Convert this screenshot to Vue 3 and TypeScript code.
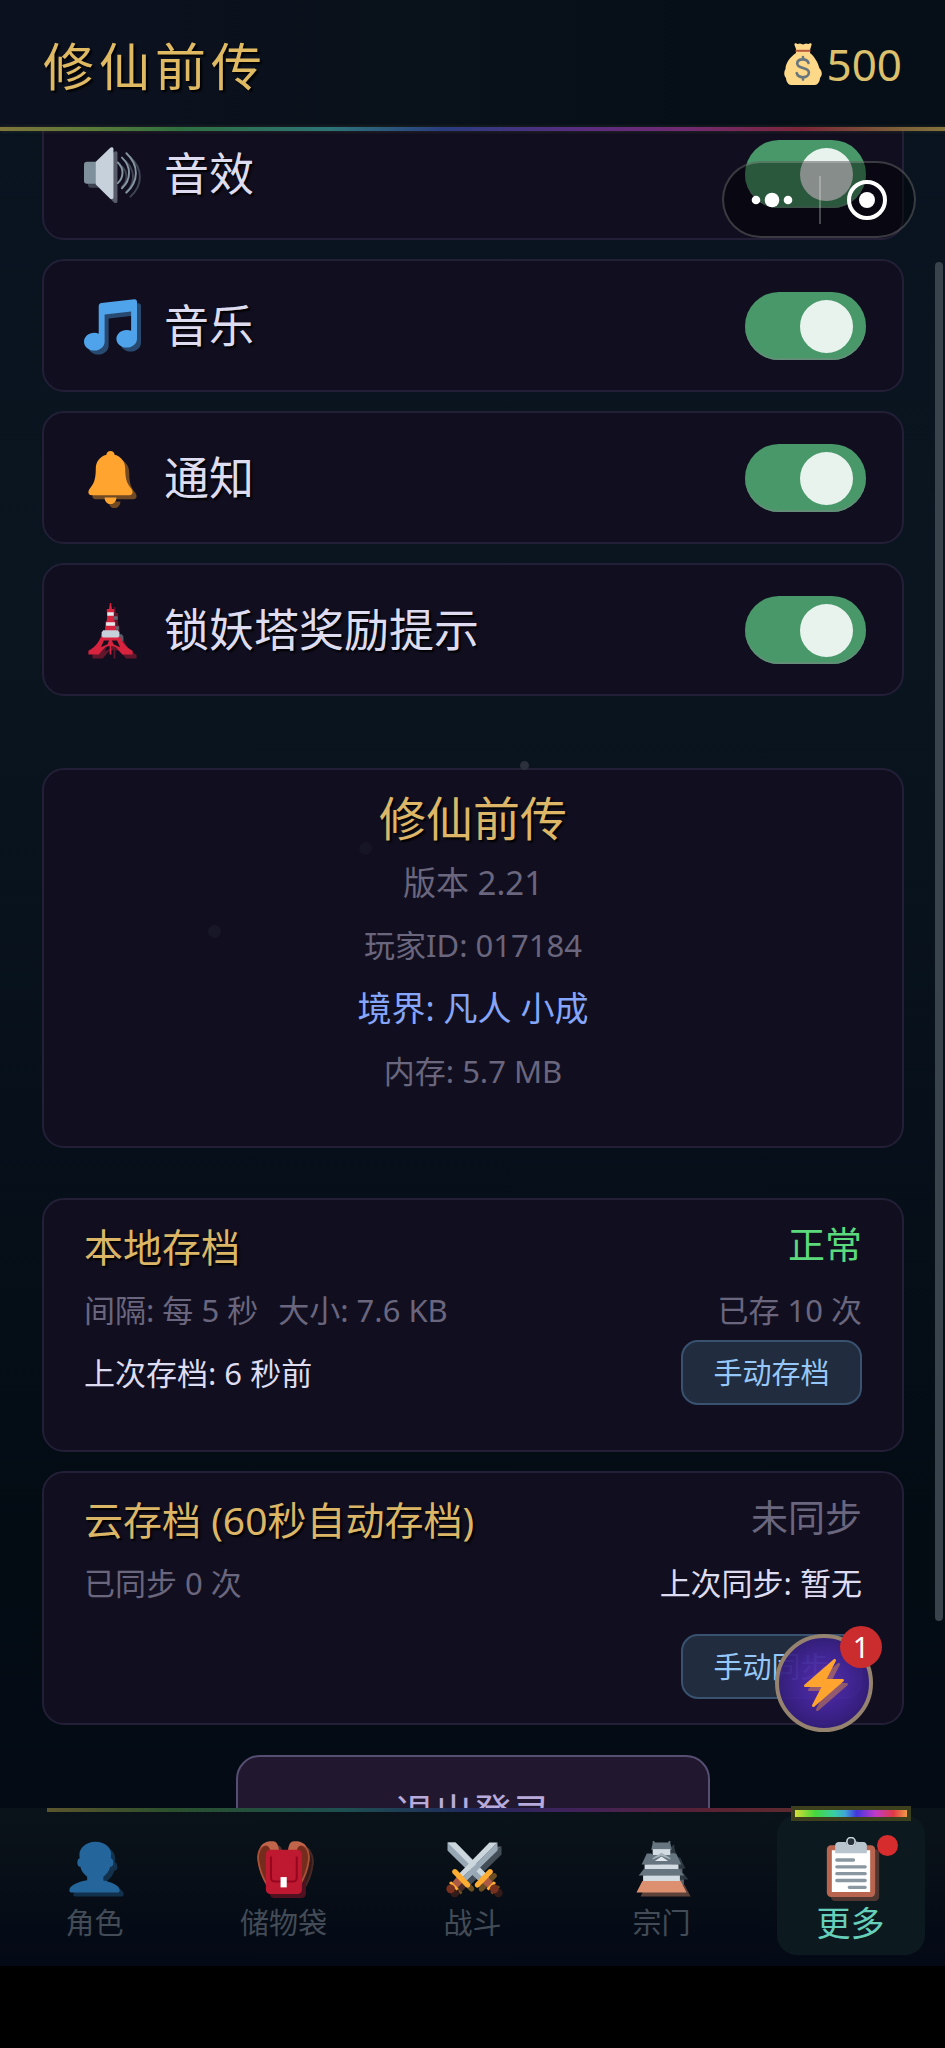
<script setup lang="ts">
import { ref } from 'vue'

interface Setting {
  id: string
  icon: string
  label: string
  on: boolean
}

interface Tab {
  id: string
  icon: string
  label: string
  dot?: boolean
}

const settings = ref<Setting[]>([
  { id: 'sound', icon: 'speaker', label: '音效', on: true },
  { id: 'music-on', icon: 'music', label: '音乐', on: true },
  { id: 'notice', icon: 'bell', label: '通知', on: true },
  { id: 'tower-tip', icon: 'tower', label: '锁妖塔奖励提示', on: true },
])

const tabs: Tab[] = [
  { id: 'role', icon: 'person', label: '角色' },
  { id: 'bag', icon: 'backpack', label: '储物袋' },
  { id: 'battle', icon: 'swords', label: '战斗' },
  { id: 'sect', icon: 'castle', label: '宗门' },
  { id: 'more', icon: 'clipboard', label: '更多', dot: true },
]

const activeTab = ref('more')
const gold = ref(500)
const taskCount = ref(1)
</script>

<template>
  <div class="app">
    <svg class="sprite" aria-hidden="true">
      <symbol id="speaker" viewBox="0 0 36 36">
        <path fill="#7f909d" d="M2 10h7v15H2a2 2 0 0 1-2-2V12a2 2 0 0 1 2-2z" />
        <path fill="#c6d1dc" d="M8 10 17.500.8C18.600-.2 20 0 20 1.500V34c0 1.500-1.400 1.800-2.500.8L8 25.500z" />
        <g fill="none" stroke="#8796a3" stroke-width="1.300" stroke-linecap="round">
          <path d="M23 10.500c4.200 4 4.200 10 0 14" />
          <path d="M25.800 7.200c6.400 6 6.400 14.800 0 20.800" />
          <path d="M28.800 4.200c8.600 8 8.600 18.800 0 26.800" />
        </g>
      </symbol>
      <symbol id="music" viewBox="0 0 36 36">
        <path fill="#4fa3ea" d="M34.209.206 11.791 2.793C10.806 2.907 10 3.811 10 4.803v18.782C9.090 23.214 8.075 23 7 23c-3.865 0-7 2.685-7 6 0 3.314 3.135 6 7 6s7-2.686 7-6V10.539l18-2.077v13.124c-.910-.372-1.925-.586-3-.586-3.865 0-7 2.685-7 6 0 3.314 3.135 6 7 6s7-2.686 7-6V1.803c0-.992-.806-1.710-1.791-1.597z" />
      </symbol>
      <symbol id="bell" viewBox="0 0 36 36">
        <path fill="#ffa42e" d="M18 0c1.500 0 2.700 1 2.800 2.500C25.400 3.700 28 7.500 28 12c0 8 1.500 10 4 13.500.700 1 1 1.600 1 2.500 0 1.200-.900 2-2.200 2H5.200C3.900 30 3 29.200 3 28c0-.900.300-1.500 1-2.500C6.500 22 8 20 8 12c0-4.500 2.600-8.300 7.200-9.500C15.300 1 16.500 0 18 0zM14 31.500h8c0 2.700-1.700 4.500-4 4.500s-4-1.800-4-4.500z" />
      </symbol>
      <symbol id="tower" viewBox="0 0 36 36">
        <path fill="#d8233e" d="M17.600 0h.8l.6 4h1.500v2.500H20l.6 6h.7l.5 7h1.700c1.500 6.500 4.500 10 9.500 13v2.500h-7l-3-3.500c-2-3-8-3-10 0l-3 3.500H3v-2.500c5-3 8-6.500 9.500-13h1.700l.5-7h.7l.6-6h-.5V4H17z" />
        <path fill="#e4e9ee" d="M15.800 6.200h4.400v2.500h-4.400zM15 13h6v2.500h-6z" />
        <path fill="#c6d1dc" d="M13 18.500h10l1 1.500v2.500l-1 1H13l-1-1V20z" />
        <path fill="#12101f" d="M13.500 25.500h3.500L16 28l-4.500 2zM19 25.500h3.500l2 4.500-4.500-2z" />
        <path fill="#d8233e" d="M17.400 25h1.200v10h-1.200z" />
      </symbol>
      <symbol id="person" viewBox="0 0 36 36">
        <path fill="#24659c" d="M24 26.799v-2.566c2-1.348 4.080-3.779 4.703-6.896.186.103.206.170.413.170.991 0 1.709-1.287 1.709-2.873 0-1.562-.823-2.827-1.794-2.865.187-.674.293-1.577.293-2.735C29.324 5.168 26 .527 18.541.527c-6.629 0-10.777 4.641-10.777 8.507 0 1.123.069 2.043.188 2.755-.911.137-1.629 1.352-1.629 2.845 0 1.587.804 2.873 1.796 2.873.206 0 .025-.067.209-.170C8.952 20.453 11 22.885 13 24.232v2.414c-5 .645-12 3.437-12 6.230v1.061C1 35 2.076 35 3.137 35h29.725C33.924 35 35 35 35 33.938v-1.061c0-2.615-6-5.225-11-6.078z" />
      </symbol>
      <symbol id="backpack" viewBox="0 0 36 36">
        <path fill="#762c1c" d="M7 2C2 3-.500 8 .500 14c1 7 3.500 12 6.500 17l3-2V6zM29 2c5 1 7.500 6 6.500 12-1 7-3.500 12-6.500 17l-3-2V6z" />
        <path fill="none" stroke="#a8523a" stroke-width="1.200" d="M7 2C2 3 0 8 1 14c1 7 3.500 12 6 16M29 2c5 1 7 6 6 12-1 7-3.500 12-6 16" />
        <path fill="#c0644a" d="M2 4.500C4 1 7 0 11 .200c2.500 0 3.500 2.500 4 6.300H9C8.500 2.500 5 2 2 4.500zM34 4.500C32 1 29 0 25 .200c-2.500 0-3.500 2.500-4 6.300h6c.500-4 4-4.500 7-2z" />
        <rect x="6" y="6" width="24.500" height="30" rx="3" fill="#be1931" />
        <path fill="none" stroke="#96061f" stroke-width="1.400" d="M9.500 10.500V25a2.500 2.500 0 0 0 2.500 2.500h12.500A2.500 2.500 0 0 0 27 25V10.500" />
        <path fill="#fff" d="M16 24.500h4.200v7H16z" />
      </symbol>
      <symbol id="swords" viewBox="0 0 36 36">
        <path fill="#97a7b4" d="M1 1v5.500L22 27l5-5L6.500 1z" />
        <path fill="#ccd6dd" d="M1 1l23.500 23.500L27 22 6.500 1z" />
        <path fill="#ad5a45" d="m27.500 23-4 4 5.500 5.500 3.500-3.500zM8.500 23l4 4-5.500 5.500-3.500-3.500z" />
        <path fill="#ffac33" d="M31.700 21.700a1.900 1.900 0 0 0-3-2.200l-8.500 8.800a1.900 1.900 0 1 0 2.800 2.500zM34 28.500l-1.500-1.200-5 5 1.300 1.400zM2 28.500l1.500-1.200 5 5-1.300 1.400z" />
        <circle cx="32.800" cy="32.500" r="3" fill="#78301f" />
        <circle cx="3.200" cy="32.500" r="3" fill="#78301f" />
        <path fill="#9aaab6" d="M35 1v5.500L14 27l-2.500-2.500z" />
        <path fill="#ccd6dd" d="M35 1 11.500 24.500 9 22 29.500 1z" />
        <path fill="#ffac33" d="M4.300 21.700a1.900 1.900 0 0 1 3-2.200l8.500 8.800a1.900 1.900 0 1 1-2.800 2.500z" />
      </symbol>
      <symbol id="castle" viewBox="0 0 36 36">
        <path fill="#66757f" d="M12 0h1l.500 1h9l.500-1h1v1.500l1 4.500H11l1-4.500z" />
        <path fill="#d3dce3" d="M12 5.500h12V10H12z" />
        <path fill="#66757f" d="M8 8.500h3l1 1h12l1-1h3l3.500 7.500H4.500z" />
        <path fill="#a5b2bc" d="m18 8 6 3.500v1L18 10l-6 2.500v-1z" />
        <path fill="#e1e8ed" d="m18 10.500 4.500 3h-9z" />
        <path fill="#d3dce3" d="M6.500 16h23v3.500h-23z" />
        <path fill="#66757f" d="M6 19h24l3.500 4.500h-31z" />
        <path fill="#d3dce3" d="M5.500 23.500h25v3.700h-25z" />
        <path fill="#dd9070" d="M5 27.200h26L35 35H1z" />
      </symbol>
      <symbol id="clipboard" viewBox="0 0 36 36">
        <rect x="3.500" y="5" width="29" height="31" rx="2.500" fill="#b8644e" />
        <path fill="#fff" d="M6.500 8h23v25h-23z" />
        <circle cx="18" cy="2.800" r="2.500" fill="#26323a" stroke="#ccd6dd" stroke-width="1" />
        <path fill="#b8c5cf" d="M10.500 3h4.300a3.300 3.300 0 0 0 6.400 0h4.300c1 0 2 .8 2 2v4.800h-19V5c0-1.200 1-2 2-2z" />
        <path stroke="#8997a0" stroke-width="2" stroke-linecap="round" d="M9.500 13.800h10M9.500 17.900h17M9.500 22h17M9.500 26.100h17M17 30.200h9.500" />
      </symbol>
      <symbol id="bolt" viewBox="0 0 36 36">
        <path fill="#ffa42e" d="M32.938 15.651C32.792 15.260 32.418 15 32 15H19.925L26.890 1.458c.219-.426.106-.947-.271-1.243C26.437.071 26.218 0 26 0c-.233 0-.466.082-.653.243L18 6.588 3.347 19.243c-.316.273-.430.714-.284 1.105S3.582 21 4 21h12.075L9.110 34.542c-.219.426-.106.947.271 1.243.182.144.401.215.619.215.233 0 .466-.082.653-.243L18 29.412l14.653-12.655c.317-.273.430-.714.285-1.106z" />
      </symbol>
    </svg>

    <header class="topbar">
      <h1 class="brand">修仙前传</h1>
      <div class="gold">
        <svg class="purse" viewBox="0 0 38 42" aria-hidden="true">
          <path fill="#fdd888" d="M12 6 10.500 2C10 .5 11.500-.3 13 .8c1 .7 2-.3 3-.3s2 1 3 1 2-1 3-1 2 1 3 .3c1.500-1.100 3-.3 2.500 1.200L26 7v3c5 4 8 10 9.300 15 2 2 3.200 5 2 8-.3 1-1 1-1.300 2 0 3.500-2.500 7-5 7H7c-2.500 0-5-3.500-5-7C0 33-.5 29 1.500 26c0-6 5-12.500 10.500-16z" />
          <path fill="#b8583c" d="M11.500 6.800h15v2h-15z" />
          <path fill="none" stroke="#67757f" stroke-width="2.600" stroke-linecap="round" d="M24.500 20c-.8-2.600-3-3.600-5.700-3.600-3.300 0-5.600 1.600-5.600 4.200 0 6 11.700 2.800 11.700 9 0 2.800-2.600 4.600-5.900 4.600-3.200 0-5.600-1.300-6.300-4M19 14v2.400M19 34.200v2.400" />
        </svg>
        <span>{{ gold }}</span>
      </div>
    </header>

    <main class="content">
      <section class="stack settings">
        <div v-for="item in settings" :key="item.id" class="card setting">
          <svg class="icon" aria-hidden="true">
            <use class="ghost" :href="'#' + item.icon" />
            <use :href="'#' + item.icon" />
          </svg>
          <label :for="item.id">{{ item.label }}</label>
          <input :id="item.id" v-model="item.on" class="toggle" type="checkbox" role="switch" />
        </div>
      </section>

      <section class="card about">
        <h2 class="about-title">修仙前传</h2>
        <p class="version">版本 2.21</p>
        <p>玩家ID: 017184</p>
        <p class="realm">境界: 凡人 小成</p>
        <p>内存: 5.7 MB</p>
      </section>

      <section class="stack">
        <article class="card save">
          <div class="line head">
            <h2>本地存档</h2>
            <span class="status ok">正常</span>
          </div>
          <div class="line muted">
            <span class="pair"><span>间隔: 每 5 秒</span><span>大小: 7.6 KB</span></span>
            <span>已存 10 次</span>
          </div>
          <div class="line">
            <span>上次存档: 6 秒前</span>
            <button class="small-button" type="button">手动存档</button>
          </div>
        </article>

        <article class="card save cloud">
          <div class="line head">
            <h2>云存档 (60秒自动存档)</h2>
            <span class="status">未同步</span>
          </div>
          <div class="line">
            <span class="muted">已同步 0 次</span>
            <span>上次同步: 暂无</span>
          </div>
          <div class="line action">
            <button class="small-button" type="button">手动同步</button>
          </div>
        </article>
      </section>

      <button class="logout" type="button">退出登录</button>

      <i class="mote mote-a"></i>
      <i class="mote mote-b"></i>
      <i class="mote mote-c"></i>
      <i class="scrollbar"></i>

      <button class="quick" type="button" aria-label="快捷任务">
        <svg class="icon bolt" aria-hidden="true">
          <use class="ghost" href="#bolt" />
          <use href="#bolt" />
        </svg>
        <span class="count">{{ taskCount }}</span>
      </button>
    </main>

    <nav class="tabs">
      <div v-for="tab in tabs" :key="tab.id" class="cell">
        <button
          class="tab"
          :class="{ active: tab.id === activeTab }"
          type="button"
          @click="activeTab = tab.id"
        >
          <span class="tab-icon">
            <svg class="icon" aria-hidden="true">
              <use class="ghost" :href="'#' + tab.icon" />
              <use :href="'#' + tab.icon" />
            </svg>
            <i v-if="tab.dot" class="dot"></i>
          </span>
          <span class="tab-label">{{ tab.label }}</span>
        </button>
      </div>
    </nav>
    <div class="safe-area"></div>

    <div class="capsule">
      <button type="button" aria-label="菜单">
        <svg width="42" height="16" viewBox="0 0 42 16" fill="#fff" aria-hidden="true">
          <circle cx="5" cy="8" r="4.300" />
          <circle cx="21" cy="8" r="7.300" />
          <circle cx="37" cy="8" r="4.300" />
        </svg>
      </button>
      <button type="button" aria-label="关闭">
        <svg width="42" height="42" viewBox="0 0 42 42" aria-hidden="true">
          <circle cx="21" cy="21" r="18" fill="none" stroke="#fff" stroke-width="4" />
          <circle cx="21" cy="21" r="8" fill="#fff" />
        </svg>
      </button>
    </div>
  </div>
</template>

<style>
body {
  margin: 0;
  background: #000;
}
</style>

<style scoped>
* {
  box-sizing: border-box;
}

h1,
h2,
p {
  margin: 0;
  font-weight: 400;
}

button {
  padding: 0;
  border: 0;
  background: none;
  color: inherit;
  font: inherit;
  cursor: pointer;
}

.app {
  position: relative;
  display: flex;
  flex-direction: column;
  height: 100vh;
  overflow: hidden;
  background: linear-gradient(180deg, #08131f 0, #0a1520 30%, #07101a 55%, #030b13 75%, #050b16 100%);
  color: #dedcf0;
  font-family: "Noto Sans", "Noto Sans CJK SC", sans-serif;
  font-size: 31px;
}

.sprite {
  position: absolute;
  width: 0;
  height: 0;
}

.icon {
  flex: none;
  width: 53px;
  height: 53px;
  overflow: visible;
}

.ghost {
  opacity: 0.4;
  transform: translate(4px, 4px);
}

.topbar {
  position: relative;
  z-index: 1;
  flex: none;
  display: flex;
  align-items: center;
  justify-content: space-between;
  height: 131px;
  padding: 0 43px 4px;
  background: linear-gradient(90deg, #0c1120, #09111a 45%, #060e18 75%, #060e17);
}

.topbar::after {
  content: "";
  position: absolute;
  inset: auto 0 0;
  height: 4px;
  background: linear-gradient(90deg, #80753a, #5a7a39 10%, #2f7040 19%, #2c7478 35%, #2a3c80 47%, #5b2c80 62%, #722a70 73%, #7c2638 85%, #7c5a38 94%, #84733c);
  box-shadow: 0 0 4px rgba(90, 90, 60, 0.4);
}

.brand {
  color: #e0b963;
  font-size: 51px;
  letter-spacing: 5px;
  text-shadow: 2px 2px 2px #000;
}

.gold {
  display: flex;
  align-items: center;
  gap: 4px;
  color: #dcc06c;
  font-size: 44px;
}

.purse {
  width: 38px;
  height: 42px;
}

.content {
  position: relative;
  flex: 1;
  min-height: 0;
  padding: 0 41px 0 42px;
  overflow: hidden;
}

.stack {
  display: flex;
  flex-direction: column;
  gap: 19px;
}

.settings {
  margin-top: -24px;
}

.card {
  border: 2px solid #221f36;
  border-radius: 22px;
  background: #110f1f;
}

.setting {
  display: flex;
  align-items: center;
  gap: 27px;
  height: 133px;
  padding: 0 36px 0 40px;
}

.setting label {
  flex: 1;
  padding-bottom: 4px;
  font-size: 45px;
  text-shadow: 2px 2px 2px #000;
}

.toggle {
  position: relative;
  width: 121px;
  height: 68px;
  margin: 0;
  appearance: none;
  border-radius: 34px;
  background: #3a4150;
  cursor: pointer;
}

.toggle::before {
  content: "";
  position: absolute;
  top: 8px;
  left: 13px;
  width: 53px;
  height: 53px;
  border-radius: 50%;
  background: #e8f3ee;
}

.toggle:checked {
  background: #48986a;
  box-shadow: inset 0 -2px 0 #618f77;
}

.toggle:checked::before {
  right: 13px;
  left: auto;
}

.about {
  margin: 72px 0 50px;
  padding: 18px 0 43px;
  color: #6a667e;
  line-height: 63px;
  text-align: center;
}

.about-title {
  padding-bottom: 3px;
  color: #ddb668;
  font-size: 47px;
  line-height: 60px;
  text-shadow: 2px 2px 2px #000;
}

.about .version {
  font-size: 33px;
}

.about .realm {
  color: #85a6fb;
  font-size: 34px;
}

.save {
  padding: 15px 40px 46px;
}

.save h2 {
  color: #dcb667;
  font-size: 39px;
  text-shadow: 2px 2px 2px #000;
}

.line {
  display: flex;
  align-items: center;
  justify-content: space-between;
  height: 63px;
  white-space: nowrap;
}

.line > span {
  padding-bottom: 3px;
}

.line.head {
  padding-bottom: 4px;
}

.pair {
  display: flex;
  gap: 20px;
}

.muted,
.status {
  color: #6a667e;
}

.status {
  font-size: 37px;
}

.status.ok {
  color: #5bd97c;
}

.cloud {
  padding-bottom: 24px;
}

.action {
  justify-content: flex-end;
  height: 65px;
  margin-top: 20px;
}

.small-button {
  flex: none;
  width: 181px;
  height: 65px;
  padding-bottom: 3px;
  border: 2px solid #395270;
  border-radius: 17px;
  background: #212c3e;
  color: #95c8f8;
  font-size: 29px;
}

.logout {
  display: block;
  width: 55%;
  height: 116px;
  margin: 30px auto 0;
  padding-bottom: 6px;
  border: 2px solid #564f72;
  border-radius: 24px;
  background: #21182f;
  color: #b8aadb;
  font-size: 39px;
}

.mote {
  position: absolute;
  border-radius: 50%;
}

.mote-a {
  top: 630px;
  left: 55%;
  width: 9px;
  height: 9px;
  background: #2c303c;
}

.mote-b {
  top: 711px;
  left: 38%;
  width: 13px;
  height: 13px;
  background: #161525;
}

.mote-c {
  top: 794px;
  left: 22%;
  width: 13px;
  height: 13px;
  background: #171728;
}

.scrollbar {
  position: absolute;
  top: 131px;
  right: 2px;
  bottom: 187px;
  width: 8px;
  border-radius: 4px;
  background: #39434b;
}

.quick {
  position: absolute;
  right: 72px;
  bottom: 76px;
  display: grid;
  place-items: center;
  width: 98px;
  height: 98px;
  border: 4px solid #95836f;
  border-radius: 50%;
  background: radial-gradient(circle, #5a2cacf5 0, #43259af0 40%, #271862f2 100%);
}

.bolt {
  width: 48px;
  height: 48px;
}

.count {
  position: absolute;
  top: -12px;
  right: -13px;
  width: 42px;
  height: 42px;
  border-radius: 50%;
  background: #cb2c2d;
  color: #fff;
  font-size: 29px;
  line-height: 41px;
}

.tabs {
  position: relative;
  flex: none;
  display: grid;
  grid-template-columns: repeat(5, 1fr);
  padding: 7px 0 11px;
  background: linear-gradient(180deg, #0b131a, #060d16 60%, #040916);
}

.tabs::before {
  content: "";
  position: absolute;
  inset: 0 5% auto;
  height: 4px;
  background: linear-gradient(90deg, #6a6130, #2f5a30 15%, #215a5b 35%, #252c68 50%, #4a2566 62%, #682437 78%, #703a30);
  opacity: 0.85;
}

.cell {
  display: grid;
  justify-items: center;
}

.tab {
  position: relative;
  display: flex;
  flex-direction: column;
  align-items: center;
  gap: 6px;
  width: 148px;
  padding: 22px 0 12px;
  border-radius: 20px;
  color: #434b57;
  font-size: 29px;
}

.tab-icon {
  position: relative;
  display: grid;
  place-items: center;
  width: 60px;
  height: 60px;
}

.tab-label {
  line-height: 40px;
}

.tab.active {
  background: #0c191f;
  color: #66cfba;
  font-size: 34px;
}

.tab.active .icon {
  width: 60px;
  height: 60px;
}

.tab.active::before {
  content: "";
  position: absolute;
  top: -5px;
  left: 18px;
  right: 18px;
  height: 7px;
  background: linear-gradient(90deg, #d6df35, #45d83c 18%, #38cfa5 35%, #3fa4d8 45%, #4236dc 55%, #c13ac8 72%, #e03a45 88%, #ef9a45);
  box-shadow: 0 0 0 4px #3d401c;
}

.dot {
  position: absolute;
  top: -2px;
  right: -17px;
  width: 21px;
  height: 21px;
  border-radius: 50%;
  background: #d62c2e;
}

.safe-area {
  flex: none;
  height: 82px;
  background: #000;
}

.capsule {
  position: absolute;
  z-index: 2;
  top: 161px;
  right: 29px;
  display: grid;
  grid-template-columns: 1fr 1fr;
  width: 194px;
  height: 77px;
  border: 2px solid rgba(255, 255, 255, 0.2);
  border-radius: 39px;
  background: rgba(0, 0, 0, 0.42);
}

.capsule button {
  display: grid;
  place-items: center;
}

.capsule button + button {
  position: relative;
}

.capsule button + button::before {
  content: "";
  position: absolute;
  left: 0;
  width: 2px;
  height: 48px;
  background: rgba(255, 255, 255, 0.25);
}
</style>
